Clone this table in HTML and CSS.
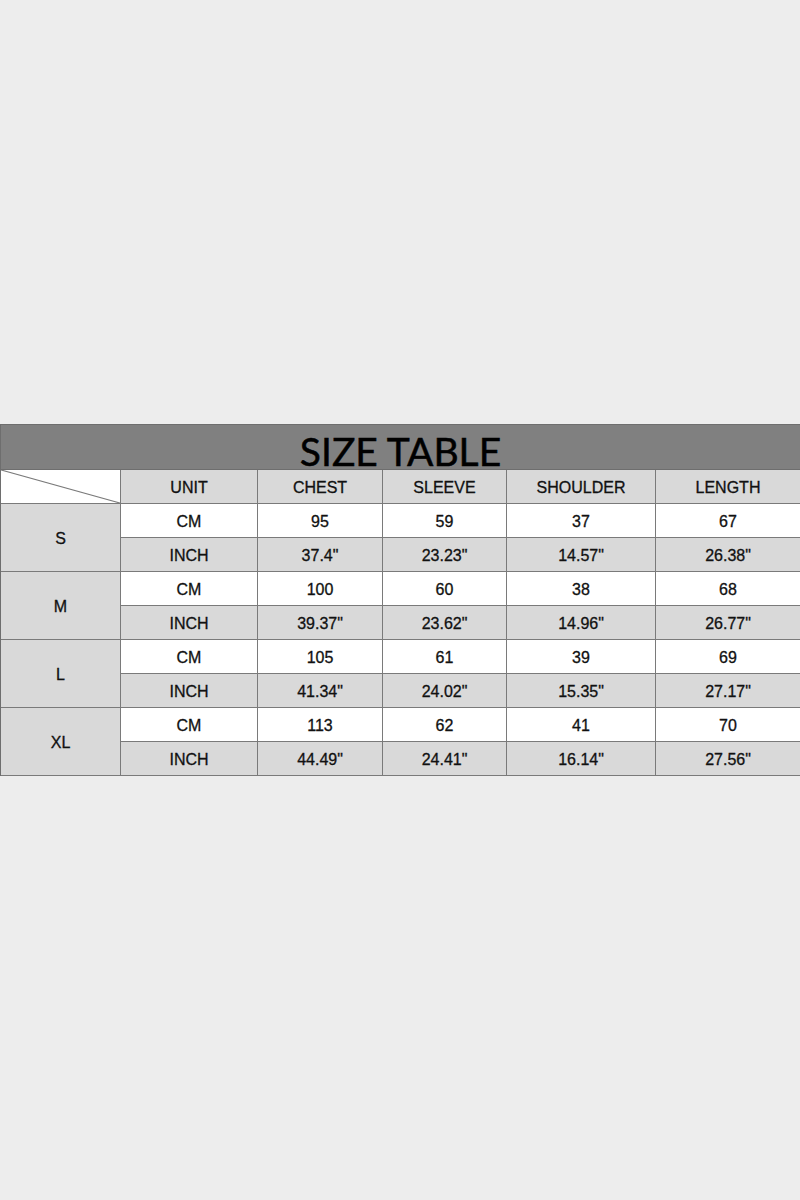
FILE: index.html
```html
<!DOCTYPE html>
<html>
<head>
<meta charset="utf-8">
<link rel="stylesheet" href="styles.css">
</head>
<body>
<div class="page">
  <div class="table">
    <div class="title"><span class="title-text">SIZE TABLE</span></div>
    <div class="cell corner"><svg class="diag" viewBox="0 0 100 100" preserveAspectRatio="none"><line x1="0" y1="0" x2="100" y2="100" stroke="#7a7a7a" stroke-width="1.2" vector-effect="non-scaling-stroke"/></svg></div>
    <div class="cell gray">UNIT</div>
    <div class="cell gray">CHEST</div>
    <div class="cell gray">SLEEVE</div>
    <div class="cell gray">SHOULDER</div>
    <div class="cell gray">LENGTH</div>

    <div class="cell gray size">S</div>
    <div class="cell">CM</div><div class="cell">95</div><div class="cell">59</div><div class="cell">37</div><div class="cell">67</div>
    <div class="cell gray">INCH</div><div class="cell gray">37.4"</div><div class="cell gray">23.23"</div><div class="cell gray">14.57"</div><div class="cell gray">26.38"</div>

    <div class="cell gray size">M</div>
    <div class="cell">CM</div><div class="cell">100</div><div class="cell">60</div><div class="cell">38</div><div class="cell">68</div>
    <div class="cell gray">INCH</div><div class="cell gray">39.37"</div><div class="cell gray">23.62"</div><div class="cell gray">14.96"</div><div class="cell gray">26.77"</div>

    <div class="cell gray size">L</div>
    <div class="cell">CM</div><div class="cell">105</div><div class="cell">61</div><div class="cell">39</div><div class="cell">69</div>
    <div class="cell gray">INCH</div><div class="cell gray">41.34"</div><div class="cell gray">24.02"</div><div class="cell gray">15.35"</div><div class="cell gray">27.17"</div>

    <div class="cell gray size">XL</div>
    <div class="cell">CM</div><div class="cell">113</div><div class="cell">62</div><div class="cell">41</div><div class="cell">70</div>
    <div class="cell gray">INCH</div><div class="cell gray">44.49"</div><div class="cell gray">24.41"</div><div class="cell gray">16.14"</div><div class="cell gray">27.56"</div>
  </div>
</div>
</body>
</html>
```
FILE: styles.css
```css
html, body {
  margin: 0;
  padding: 0;
  background: #ededed;
}
.page {
  width: 800px;
  height: 1200px;
  padding-top: 424px;
  box-sizing: border-box;
}
.table {
  display: grid;
  grid-template-columns: 120px 137px 125px 124px 149px 145px;
  grid-template-rows: 45px;
  grid-auto-rows: 34px;
  border-top: 1px solid #6e6e6e;
  border-left: 1px solid #6e6e6e;
  width: 800px;
  box-sizing: border-box;
  font-family: "Liberation Sans", Arial, sans-serif;
  font-size: 16px;
  color: #111;
  -webkit-text-stroke: 0.3px #111;
}
.title {
  grid-column: 1 / -1;
  grid-row: 1;
  background: #808080;
  border-right: 1px solid #6e6e6e;
  border-bottom: 1px solid #6e6e6e;
  box-sizing: border-box;
  display: flex;
  justify-content: center;
  align-items: flex-start;
}
.title-text {
  font-family: "Lato", "Open Sans", sans-serif;
  font-size: 39px;
  font-weight: 400;
  letter-spacing: 0;
  line-height: 40px;
  margin-top: 6px;
  color: #000;
  -webkit-text-stroke: 0.5px #000;
}
.cell {
  background: #fff;
  border-right: 1px solid #7a7a7a;
  border-bottom: 1px solid #7a7a7a;
  box-sizing: border-box;
  display: flex;
  align-items: center;
  justify-content: center;
  padding-top: 3px;
}
.gray { background: #d9d9d9; }
.size { grid-row: span 2; }
.corner {
  position: relative;
  padding: 0;
}
.diag {
  position: absolute;
  inset: 0;
  width: 100%;
  height: 100%;
}
```
